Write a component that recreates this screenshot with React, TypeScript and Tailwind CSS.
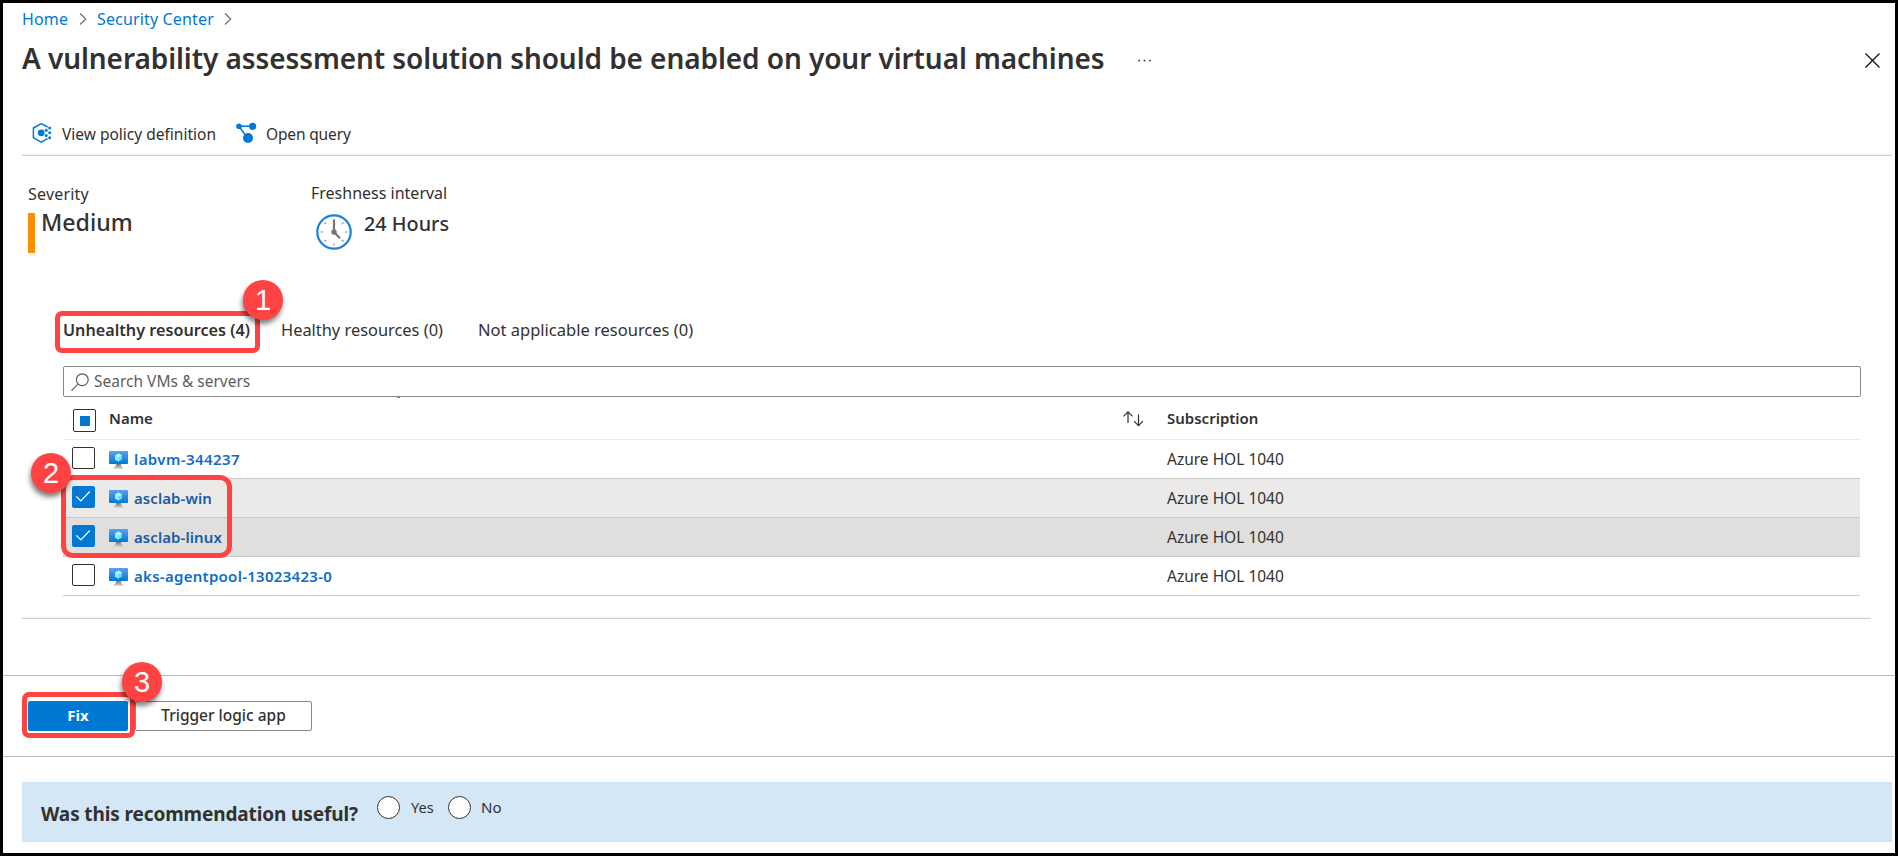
import type { ReactNode } from 'react';

function Chevron() {
  return (
    <svg className="mt-[4px] h-[12px] w-[8px]" viewBox="0 0 8 12" fill="none" stroke="#6a6866" strokeWidth="1.1">
      <path d="M1 0.5 6.8 6 1 11.5" />
    </svg>
  );
}

function PolicyIcon() {
  return (
    <svg className="h-[22px] w-[20px] shrink-0" viewBox="0 0 20 22">
      <path
        d="M15.6 5 9.2 1.6 1.4 6v9.6l7.8 4.6 6.4-3.6"
        fill="none"
        stroke="#0078d4"
        strokeWidth="1.5"
        strokeLinejoin="round"
      />
      <circle cx="9.2" cy="10.8" r="3.4" fill="#0078d4" />
      <g fill="#0078d4">
        <circle cx="17.7" cy="5.9" r="1.5" />
        <circle cx="17.7" cy="10.8" r="1.5" />
        <circle cx="17.7" cy="15.7" r="1.5" />
        <circle cx="14.2" cy="8.2" r="1.5" />
        <circle cx="14.2" cy="13.4" r="1.5" />
      </g>
    </svg>
  );
}

function QueryIcon() {
  return (
    <svg className="h-[22px] w-[21px] shrink-0" viewBox="0 0 21 22">
      <path d="M3 4.3H16M3 4.3 12 17" fill="none" stroke="#0078d4" strokeWidth="1.5" />
      <g fill="#0078d4">
        <circle cx="3" cy="4.3" r="2.8" />
        <circle cx="16.6" cy="4.3" r="3.6" />
        <circle cx="12" cy="16" r="5" />
      </g>
    </svg>
  );
}

function ClockIcon() {
  return (
    <svg className="h-[36px] w-[36px] shrink-0" viewBox="0 0 36 36">
      <circle cx="18" cy="18" r="16.7" fill="#fff" stroke="#1b80dc" strokeWidth="2.2" />
      <g stroke="#8f8f8f" strokeWidth="1.2">
        {[45, 90, 135, 180, 225, 270, 315].map((a) => (
          <path key={a} d="M18 4.6v2.2" transform={`rotate(${a} 18 18)`} />
        ))}
      </g>
      <path d="M18 5.5V18l6 6.2" fill="none" stroke="#747474" strokeWidth="2.2" />
      <circle cx="18" cy="18" r="2.7" fill="#747474" />
    </svg>
  );
}

function VmIcon() {
  return (
    <svg className="h-[18px] w-[19px] shrink-0" viewBox="0 0 19 18">
      <defs>
        <linearGradient id="screen" x1="0" y1="0" x2="0" y2="1">
          <stop offset="0" stopColor="#5ea0ef" />
          <stop offset="1" stopColor="#0078d4" />
        </linearGradient>
        <linearGradient id="stand" x1="0" y1="0" x2="0" y2="1">
          <stop offset="0" stopColor="#707070" />
          <stop offset="1" stopColor="#d2d2d2" />
        </linearGradient>
      </defs>
      <path d="M7 12.5h5c0 2.5.4 3.6 2.4 4.2v1H4.6v-1c2-.6 2.4-1.7 2.4-4.2z" fill="url(#stand)" />
      <rect width="19" height="13" rx="0.7" fill="url(#screen)" />
      <path d="M9.5 2.5 13 4.5v4L9.5 10.5 6 8.5v-4z" fill="#50e6ff" />
      <path d="M9.5 2.5 13 4.5 9.5 6.5 6 4.5z" fill="#c3f1ff" />
      <path d="M9.5 6.5v4L6 8.5v-4z" fill="#9cebff" />
    </svg>
  );
}

function Checkbox({ state }: { state: 'off' | 'on' }) {
  if (state === 'on') {
    return (
      <span className="block h-[22px] w-[23px] rounded-[2px] bg-[#0078d4]">
        <svg className="h-[22px] w-[23px]" viewBox="0 0 23 22" fill="none" stroke="#fff" strokeWidth="1.2">
          <path d="M4.3 10.3 8.8 15 17.8 5.5" />
        </svg>
      </span>
    );
  }
  return <span className="block h-[22px] w-[23px] rounded-[2px] border border-[#323130] bg-white" />;
}

function Badge({ className, children }: { className: string; children: ReactNode }) {
  return (
    <span
      className={`absolute z-20 flex h-[40px] w-[40px] items-center justify-center rounded-full bg-[#ff4242] font-['Liberation_Sans',sans-serif] text-[29px] leading-[40px] font-normal text-white shadow-[-1px_4px_5px_rgba(0,0,0,0.5)] ${className}`}
    >
      {children}
    </span>
  );
}

const resources = [
  { name: 'labvm-344237', state: 'off', row: 'bg-white', link: 'text-[#0f6cc8] tracking-[0.42px]' },
  { name: 'asclab-win', state: 'on', row: 'bg-[#ebeae8]', link: 'text-[#1c5ba4] tracking-[0.08px]' },
  { name: 'asclab-linux', state: 'on', row: 'bg-[#e0dfdd]', link: 'text-[#1c5ba4] tracking-[0.08px]' },
  { name: 'aks-agentpool-13023423-0', state: 'off', row: 'bg-white', link: 'text-[#0f6cc8] tracking-[0.28px]' },
] as const;

export default function App() {
  return (
    <div className="flex h-[856px] w-[1898px] flex-col overflow-hidden border-[3px] border-black bg-white font-['Noto_Sans',sans-serif] whitespace-nowrap text-[#323130]">
      <nav className="mt-[6px] ml-[19px] flex text-[16px] leading-[20px] tracking-[0.15px] text-[#0078d4]">
        <a className="w-[57px]">Home</a>
        <Chevron />
        <a className="ml-[10px] w-[127px]">Security Center</a>
        <Chevron />
      </nav>

      <header className="mt-[11px] ml-[19px] flex h-[36px] items-start">
        <h1 className="w-[1116px] text-[28px] leading-[36px] font-semibold tracking-[-0.08px]">
          A vulnerability assessment solution should be enabled on your virtual machines
        </h1>
        <svg className="mt-[19px] h-[3px] w-[13px]" viewBox="0 0 13 3" fill="#323130">
          <rect x="0.3" y="0.8" width="1.6" height="1.6" />
          <rect x="5.7" y="0.8" width="1.6" height="1.6" />
          <rect x="11.1" y="0.8" width="1.6" height="1.6" />
        </svg>
        <svg className="mt-[13px] mr-[15px] ml-auto h-[15px] w-[15px]" viewBox="0 0 15 15" stroke="#111" strokeWidth="1.3">
          <path d="M0.5 0.5 14.5 14.5M14.5 0.5 0.5 14.5" />
        </svg>
      </header>

      <div className="mt-[44px] mr-[3px] ml-[19px] flex h-[35px] items-start border-b border-[#f0f0f0] pt-[2px] pl-[10px] text-[15.5px] leading-[24px]">
        <PolicyIcon />
        <span className="ml-[10px] w-[174px]">View policy definition</span>
        <QueryIcon />
        <span className="ml-[9px] tracking-[-0.15px]">Open query</span>
      </div>
      <div className="mr-[3px] ml-[19px] h-px shrink-0 bg-[#d2d2d2]" />

      <section className="mt-[27px] ml-[25px] flex h-[70px]">
        <div className="w-[284px] pt-px">
          <div className="text-[16px] leading-[20px] tracking-[0.2px]">Severity</div>
          <div className="mt-[4px] flex">
            <span className="mt-[5px] h-[40px] w-[7px] bg-[#ff8c00]" />
            <span className="ml-[6px] text-[23.2px] leading-[28px] font-medium">Medium</span>
          </div>
        </div>
        <div>
          <div className="-ml-px text-[16px] leading-[20px]">Freshness interval</div>
          <div className="mt-[9px] ml-[4px] flex">
            <div className="mt-[2px]">
              <ClockIcon />
            </div>
            <span className="ml-[12px] text-[19.8px] leading-[24px] font-medium">24 Hours</span>
          </div>
        </div>
      </section>

      <div className="mt-[67px] ml-[60px] flex h-[20px] leading-[20px]">
        <div className="relative w-[218px] text-[16.2px] font-semibold">
          Unhealthy resources (4)
          <span className="absolute top-[-9px] left-[-8px] h-[42px] w-[205px] rounded-[7px] border-[5px] border-[#ff4242]" />
          <Badge className="top-[-40px] left-[180px]">1</Badge>
        </div>
        <div className="w-[197px] text-[16.4px]">Healthy resources (0)</div>
        <div className="text-[16.5px]">Not applicable resources (0)</div>
      </div>

      <div className="mt-[26px] mr-[34px] ml-[60px] flex h-[31px] items-center rounded-[2px] border border-[#8a8886] pl-[7px]">
        <svg className="h-[18px] w-[18px]" viewBox="0 0 18 18" fill="none" stroke="#605e5c" strokeWidth="1.2">
          <circle cx="11.3" cy="6.7" r="5.9" />
          <path d="M7.2 10.9 0.5 17.6" />
        </svg>
        <span className="-mt-px ml-[5px] text-[15.5px] leading-[20px] text-[#605e5c]">Search VMs &amp; servers</span>
      </div>

      <div className="relative mr-[35px] ml-[60px] flex h-[43px] border-b border-[#edebe9] text-[15px] leading-[20px] font-semibold">
        <span className="absolute top-0 left-[334px] h-px w-[3px] bg-[#e04848]" />
        <span className="mt-[12px] ml-[10px] flex h-[23px] w-[23px] items-center justify-center rounded-[2px] border border-[#323130]">
          <span className="h-[10px] w-[10px] bg-[#0078d4]" />
        </span>
        <span className="mt-[11px] ml-[13px] w-[1014px]">Name</span>
        <svg className="mt-[14px] h-[16px] w-[21px]" viewBox="0 0 21 16" fill="none" stroke="#323130" strokeWidth="1.2">
          <path d="M5 12V0.8M0.5 5.3 5 0.8 9.5 5.3M15.5 3.5V14.7M11 10.2 15.5 14.7 20 10.2" />
        </svg>
        <span className="mt-[11px] ml-[23px]">Subscription</span>
      </div>

      <div className="relative mr-[35px] ml-[60px] flex flex-col">
        {resources.map((r) => (
          <div key={r.name} className={`flex h-[39px] border-b border-[#c8c8c8] pt-[7px] pl-[9px] ${r.row}`}>
            <Checkbox state={r.state} />
            <div className="mt-[4px] ml-[14px]">
              <VmIcon />
            </div>
            <a className={`mt-[2px] ml-[6px] w-[1033px] text-[15px] leading-[20px] font-semibold ${r.link}`}>{r.name}</a>
            <span className="mt-[2px] text-[15.5px] leading-[20px]">Azure HOL 1040</span>
          </div>
        ))}
        <span className="absolute top-[35px] left-[-2px] h-[83px] w-[171px] rounded-[12px] border-[5px] border-[#ff4242]" />
        <Badge className="top-[13px] left-[-32px]">2</Badge>
      </div>

      <div className="mt-[21px] mr-[24px] ml-[19px] h-[2px] shrink-0 border-b border-[#d4d4d4] bg-[#f0f0f0]" />

      <div className="relative mt-[56px] flex h-[82px] shrink-0 border-y border-[#b9b9b9] pt-[25px] pl-[25px] text-[15px] leading-[28px]">
        <button className="h-[30px] w-[100px] rounded-[2px] bg-[#0078d4] pb-[2px] font-bold text-white">Fix</button>
        <button className="ml-[7px] h-[30px] w-[177px] rounded-[2px] border border-[#8a8886] pb-[2px] text-[15.5px] leading-[26px] font-medium">
          Trigger logic app
        </button>
        <span className="absolute top-[16px] left-[19px] h-[46px] w-[113px] rounded-[7px] border-[5px] border-[#ff4242]" />
        <Badge className="top-[-14px] left-[119px]">3</Badge>
      </div>

      <div className="mt-[25px] mr-[3px] ml-[19px] flex h-[60px] shrink-0 items-start bg-[#d4e7f6] pl-[19px]">
        <span className="mt-[19px] w-[336px] text-[19px] leading-[26px] font-bold tracking-[-0.12px]">
          Was this recommendation useful?
        </span>
        <span className="mt-[14px] h-[23px] w-[23px] rounded-full border border-[#323130] bg-white" />
        <span className="mt-[14px] ml-[11px] w-[37px] text-[14.5px] leading-[22px]">Yes</span>
        <span className="mt-[14px] h-[23px] w-[23px] rounded-full border border-[#323130] bg-white" />
        <span className="mt-[14px] ml-[10px] text-[15px] leading-[22px]">No</span>
      </div>
    </div>
  );
}
